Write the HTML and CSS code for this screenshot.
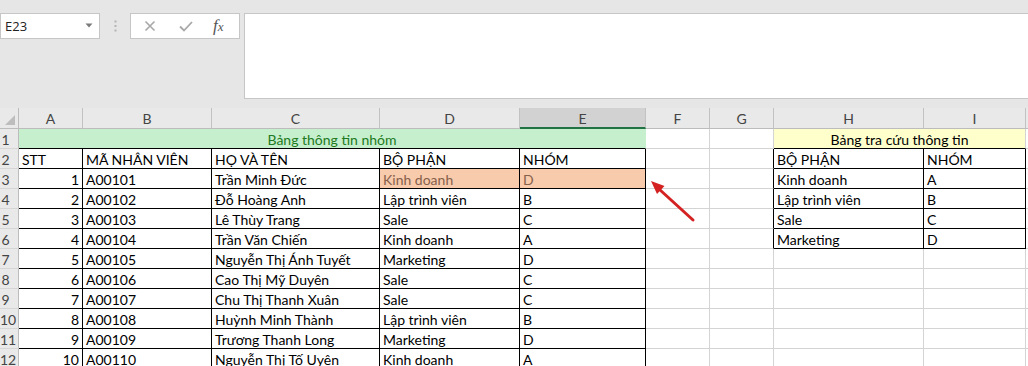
FILE: index.html
```html
<!DOCTYPE html>
<html lang="vi">
<head>
<meta charset="utf-8">
<title>Excel</title>
<link rel="stylesheet" href="styles.css">
</head>
<body>
<div class="app">
  <div class="fbar">
    <div class="namebox">
      <span class="nb-text">E23</span>
      <svg class="nb-arrow" width="8" height="5" viewBox="0 0 8 5"><polygon points="0.5,0.5 7.5,0.5 4,4.5" fill="#7b7b7b"/></svg>
    </div>
    <div class="grip">
      <svg width="3" height="12" viewBox="0 0 3 12"><rect x="0.5" y="0.5" width="2" height="2" fill="#b4b4b4"/><rect x="0.5" y="5" width="2" height="2" fill="#b4b4b4"/><rect x="0.5" y="9.5" width="2" height="2" fill="#b4b4b4"/></svg>
    </div>
    <div class="fxbox">
      <svg class="ic-x" width="12" height="12" viewBox="0 0 12 12"><path d="M1.5 1.5 L10.5 10.5 M10.5 1.5 L1.5 10.5" stroke="#a8a8a8" stroke-width="1.6" fill="none"/></svg>
      <svg class="ic-ok" width="14" height="11" viewBox="0 0 14 11"><path d="M1 5.5 L5 9.5 L13 1" stroke="#a8a8a8" stroke-width="1.8" fill="none"/></svg>
      <span class="fx"><i>f</i><small>x</small></span>
    </div>
    <div class="finput"></div>
  </div>

  <div class="sheet">
    <!-- header row -->
    <div class="corner"><svg width="12" height="12" viewBox="0 0 12 12"><polygon points="11,1 11,11 1,11" fill="#bdbdbd"/></svg></div>
    <div class="ch">A</div><div class="ch">B</div><div class="ch">C</div><div class="ch">D</div><div class="ch sel">E</div><div class="ch">F</div><div class="ch">G</div><div class="ch">H</div><div class="ch">I</div><div class="ch"></div>

    <!-- row 1 -->
    <div class="rh">1</div>
    <div class="c title-green">Bảng thông tin nhóm</div>
    <div class="c"></div><div class="c"></div>
    <div class="c title-yellow">Bảng tra cứu thông tin</div>
    <div class="c"></div>

    <!-- row 2 -->
    <div class="rh">2</div>
    <div class="c b">STT</div><div class="c b">MÃ NHÂN VIÊN</div><div class="c b">HỌ VÀ TÊN</div><div class="c b">BỘ PHẬN</div><div class="c b">NHÓM</div>
    <div class="c"></div><div class="c bl"></div>
    <div class="c b">BỘ PHẬN</div><div class="c b">NHÓM</div><div class="c"></div>

    <!-- row 3 -->
    <div class="rh">3</div>
    <div class="c b num">1</div><div class="c b">A00101</div><div class="c b">Trần Minh Đức</div><div class="c b hl">Kinh doanh</div><div class="c b hl">D</div>
    <div class="c"></div><div class="c bl"></div>
    <div class="c b">Kinh doanh</div><div class="c b">A</div><div class="c"></div>

    <!-- row 4 -->
    <div class="rh">4</div>
    <div class="c b num">2</div><div class="c b">A00102</div><div class="c b">Đỗ Hoàng Anh</div><div class="c b">Lập trình viên</div><div class="c b">B</div>
    <div class="c"></div><div class="c bl"></div>
    <div class="c b">Lập trình viên</div><div class="c b">B</div><div class="c"></div>

    <!-- row 5 -->
    <div class="rh">5</div>
    <div class="c b num">3</div><div class="c b">A00103</div><div class="c b">Lê Thùy Trang</div><div class="c b">Sale</div><div class="c b">C</div>
    <div class="c"></div><div class="c bl"></div>
    <div class="c b">Sale</div><div class="c b">C</div><div class="c"></div>

    <!-- row 6 -->
    <div class="rh">6</div>
    <div class="c b num">4</div><div class="c b">A00104</div><div class="c b">Trần Văn Chiến</div><div class="c b">Kinh doanh</div><div class="c b">A</div>
    <div class="c"></div><div class="c bl"></div>
    <div class="c b">Marketing</div><div class="c b">D</div><div class="c"></div>

    <!-- row 7 -->
    <div class="rh">7</div>
    <div class="c b num">5</div><div class="c b">A00105</div><div class="c b">Nguyễn Thị Ánh Tuyết</div><div class="c b">Marketing</div><div class="c b">D</div>
    <div class="c"></div><div class="c"></div><div class="c"></div><div class="c"></div><div class="c"></div>

    <!-- row 8 -->
    <div class="rh">8</div>
    <div class="c b num">6</div><div class="c b">A00106</div><div class="c b">Cao Thị Mỹ Duyên</div><div class="c b">Sale</div><div class="c b">C</div>
    <div class="c"></div><div class="c"></div><div class="c"></div><div class="c"></div><div class="c"></div>

    <!-- row 9 -->
    <div class="rh">9</div>
    <div class="c b num">7</div><div class="c b">A00107</div><div class="c b">Chu Thị Thanh Xuân</div><div class="c b">Sale</div><div class="c b">C</div>
    <div class="c"></div><div class="c"></div><div class="c"></div><div class="c"></div><div class="c"></div>

    <!-- row 10 -->
    <div class="rh">10</div>
    <div class="c b num">8</div><div class="c b">A00108</div><div class="c b">Huỳnh Minh Thành</div><div class="c b">Lập trình viên</div><div class="c b">B</div>
    <div class="c"></div><div class="c"></div><div class="c"></div><div class="c"></div><div class="c"></div>

    <!-- row 11 -->
    <div class="rh">11</div>
    <div class="c b num">9</div><div class="c b">A00109</div><div class="c b">Trương Thanh Long</div><div class="c b">Marketing</div><div class="c b">D</div>
    <div class="c"></div><div class="c"></div><div class="c"></div><div class="c"></div><div class="c"></div>

    <!-- row 12 -->
    <div class="rh">12</div>
    <div class="c b num">10</div><div class="c b">A00110</div><div class="c b">Nguyễn Thị Tố Uyên</div><div class="c b">Kinh doanh</div><div class="c b">A</div>
    <div class="c"></div><div class="c"></div><div class="c"></div><div class="c"></div><div class="c"></div>
  </div>

  <svg class="arrow" width="1028" height="366" viewBox="0 0 1028 366">
    <line x1="693" y1="220" x2="659" y2="189" stroke="#d42222" stroke-width="3" stroke-linecap="round"/>
    <polygon points="651,181 664.5,186 657,194" fill="#d42222"/>
  </svg>
</div>
</body>
</html>
```

FILE: styles.css
```css
* { box-sizing: border-box; }
html, body { margin: 0; padding: 0; }
body {
  width: 1028px;
  height: 366px;
  overflow: hidden;
  background: #ffffff;
  font-family: Lato, "Open Sans", sans-serif;
  color: #000;
}
.app { position: relative; width: 1028px; height: 366px; overflow: hidden; }

/* formula bar */
.fbar {
  height: 108px;
  background: #e6e6e6;
  display: flex;
  align-items: flex-start;
  padding-top: 13px;
}
.namebox {
  width: 100px;
  height: 26px;
  background: #fff;
  border: 1px solid #c6c6c6;
  display: flex;
  align-items: center;
  justify-content: space-between;
  padding: 0 6px 0 4px;
}
.nb-text { font-family: "Open Sans", sans-serif; font-size: 13px; color: #222; }
.nb-arrow { margin-top: -2px; }
.grip {
  width: 30px;
  height: 26px;
  display: flex;
  align-items: center;
  justify-content: center;
}
.fxbox {
  width: 110px;
  height: 26px;
  background: #fff;
  border: 1px solid #c6c6c6;
  display: flex;
  align-items: center;
  padding-left: 13px;
}
.ic-x { margin-right: 23px; }
.ic-ok { margin-right: 20px; }
.fx {
  font-family: "Liberation Serif", serif;
  font-style: italic;
  color: #555;
  font-size: 17px;
  line-height: 1;
  margin-top: -2px;
}
.fx i { font-style: italic; }
.fx small { font-size: 13px; font-style: italic; }
.finput {
  margin-left: 4px;
  flex: 1;
  height: 86px;
  background: #fff;
  border: 1px solid #c6c6c6;
  border-right: none;
}

/* sheet grid */
.sheet {
  display: grid;
  grid-template-columns: 19px 64px 129px 168px 140px 126px 64px 64px 150px 102px 1fr;
  grid-template-rows: 21px;
  grid-auto-rows: 20px;
  font-size: 14px;
}
.corner {
  background: #e9e9e9;
  border-right: 1px solid #bcbcbc;
  border-bottom: 1px solid #bcbcbc;
  display: flex;
  align-items: flex-end;
  justify-content: flex-end;
  padding: 0 2px 2px 0;
}
.ch {
  background: #e9e9e9;
  border-right: 1px solid #c2c2c2;
  border-bottom: 1px solid #bcbcbc;
  color: #444;
  text-align: center;
  line-height: 20px;
  padding-top: 1px;
}
.ch.sel {
  background: #d2d2d2;
  border-bottom: 2px solid #217346;
  color: #444;
}
.rh {
  background: #e9e9e9;
  border-right: 1px solid #bcbcbc;
  border-bottom: 1px solid #d6d6d6;
  color: #444;
  text-align: center;
  padding-right: 7px;
  padding-top: 1px;
  line-height: 20px;
  font-size: 14px;
}
.c {
  border-right: 1px solid #d4d4d4;
  border-bottom: 1px solid #d4d4d4;
  padding: 1px 3px 0;
  line-height: 20px;
  white-space: nowrap;
  overflow: visible;
}
.c.b { border-right-color: #000; border-bottom-color: #000; }
.c.bl { border-right-color: #000; }
.c.num { text-align: right; }
.c.hl { background: #f8cbad; color: #86604a; }
.title-green {
  grid-column: span 5;
  background: #c6efce;
  color: #217a21;
  text-align: center;
  border-bottom-color: #000;
  border-right-color: #c6efce;
}
.title-yellow {
  grid-column: span 2;
  background: #ffffcc;
  text-align: center;
  border-bottom-color: #000;
}

.arrow { position: absolute; left: 0; top: 0; pointer-events: none; }
```
